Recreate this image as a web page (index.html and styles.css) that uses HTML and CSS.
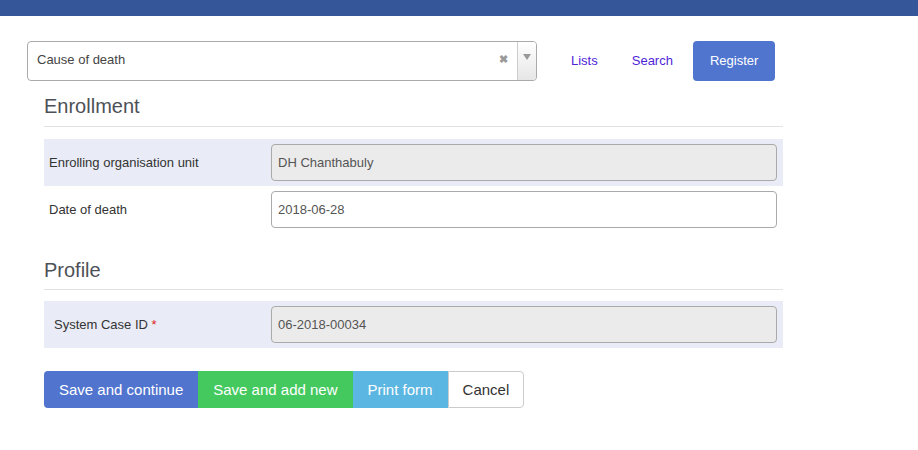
FILE: index.html
```html
<!DOCTYPE html>
<html lang="en">
<head>
  <meta charset="UTF-8">
  <meta name="viewport" content="width=device-width, initial-scale=1.0">
  <title>Register</title>
  <link rel="stylesheet" href="styles.css">
</head>
<body>

  <div class="top-bar"></div>

  <div class="page">
    <div class="toolbar">
      <div class="program-select">
        <span class="select-text">Cause of death</span>
        <span class="select-clear">&#10006;</span>
        <span class="select-arrow"><svg width="8" height="6" viewBox="0 0 8 6"><path d="M0 0h8L4 6z" fill="#999"/></svg></span>
      </div>
      <a href="#" class="nav-link">Lists</a>
      <a href="#" class="nav-link">Search</a>
      <button class="btn-register">Register</button>
    </div>

    <div class="form-area">
      <h3 class="section-title">Enrollment</h3>
      <div class="form-row shaded">
        <label class="row-label">Enrolling organisation unit</label>
        <input type="text" class="form-input" value="DH Chanthabuly" disabled>
      </div>
      <div class="form-row">
        <label class="row-label">Date of death</label>
        <input type="text" class="form-input" value="2018-06-28">
      </div>

      <h3 class="section-title profile">Profile</h3>
      <div class="form-row shaded">
        <label class="row-label indent">System Case ID <span class="required">*</span></label>
        <input type="text" class="form-input" value="06-2018-00034" disabled>
      </div>

      <div class="btn-group">
        <button class="btn btn-primary">Save and continue</button>
        <button class="btn btn-success">Save and add new</button>
        <button class="btn btn-info">Print form</button>
        <button class="btn btn-default">Cancel</button>
      </div>
    </div>
  </div>

</body>
</html>
```

FILE: styles.css
```css
body { margin: 0; font-family: "Liberation Sans", Arial, sans-serif; background: #fff; color: #333; }
.top-bar { height: 16px; background: #36569a; }
.page { padding: 25px 0 0 27px; }

.toolbar { display: flex; align-items: center; height: 40px; }
.program-select { width: 510px; height: 40px; box-sizing: border-box; border: 1px solid #aaa; border-radius: 4px; display: flex; align-items: center; margin-right: 17px; background: #fff; }
.select-text { flex: 1; padding: 0 0 3px 9px; font-size: 13px; color: #444; }
.select-clear { color: #999; font-size: 11px; font-weight: bold; margin: 0 9px 3px 0; }
.select-arrow { width: 19px; height: 38px; border-left: 1px solid #ccc; border-radius: 0 3px 3px 0; background: linear-gradient(#fff, #e6e6e6); display: flex; justify-content: center; padding-top: 12px; box-sizing: border-box; }
.nav-link { padding: 0 17px 2px; font-size: 13px; color: #4f1fd8; text-decoration: none; }
.btn-register { margin-left: 3px; height: 40px; padding: 0 17px 2px; border: none; border-radius: 4px; background: #5075cf; color: #fff; font-family: inherit; font-size: 13px; }

.form-area { margin-left: 17px; width: 739px; }
.section-title { margin: 14px 0 12px; padding-bottom: 9px; font-size: 20px; line-height: 22px; font-weight: normal; color: #4d5157; border-bottom: 1px solid #e2e2e2; }
.section-title.profile { margin: 26px 0 11px; padding-bottom: 8px; }
.form-row { display: flex; align-items: center; padding: 5px 6px 5px 0; }
.form-row.shaded { background: #e9ecf6; }
.row-label { width: 222px; padding-left: 5px; font-size: 13px; color: #333; }
.row-label.indent { padding-left: 10px; width: 217px; }
.required { color: #e02424; }
.form-input { width: 506px; height: 37px; box-sizing: border-box; padding: 0 6px; border: 1px solid #aaa; border-radius: 4px; font-family: inherit; font-size: 13px; color: #555; background: #fff; }
.form-input:disabled { background: #ebebeb; color: #555; }

.btn-group { display: flex; margin-top: 23px; }
.btn { height: 37px; padding: 0 14px; border: 1px solid transparent; font-family: inherit; font-size: 15px; color: #fff; }
.btn-primary { background: #5174cf; border-radius: 4px 0 0 4px; }
.btn-success { background: #43c95e; }
.btn-info { background: #5bb6e1; }
.btn-default { background: #fff; color: #333; border-color: #ccc; border-radius: 0 4px 4px 0; }
```
